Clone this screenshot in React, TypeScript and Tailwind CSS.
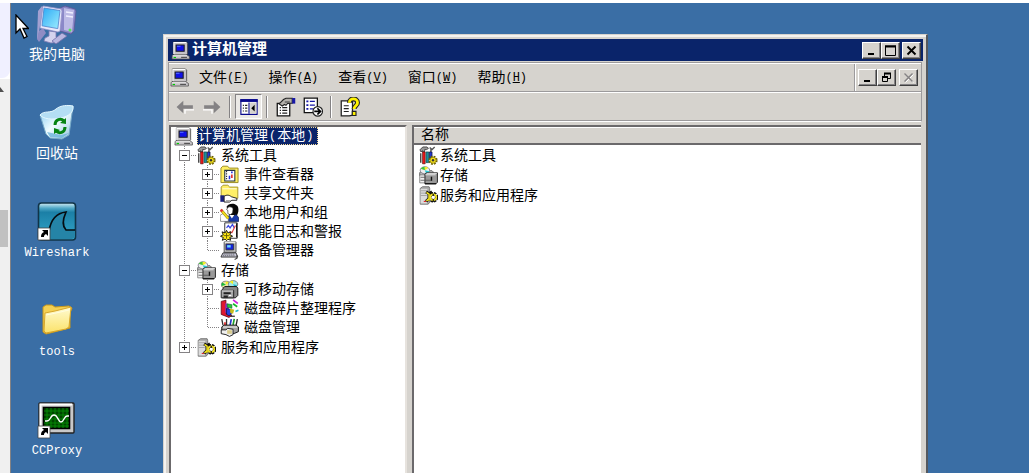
import type { ReactNode } from "react";

type IconProps = { className?: string };
type TreeItem = { label: string; icon: ReactNode; expandable?: boolean };

const cjk = "font-['Liberation_Mono','Noto_Sans_CJK_SC',monospace]";

function Svg({ children, size = 16, className = "size-[19px]" }: { children: ReactNode; size?: number; className?: string }) {
  return (
    <svg viewBox={`0 0 ${size} ${size}`} className={`${className} shrink-0`} aria-hidden="true">
      {children}
    </svg>
  );
}

/* ---- 16px icons ---- */

function ComputerIcon({ className }: IconProps) {
  return (
    <Svg className={className}>
      <path d="M2 .8h11l1 1v9l-1 1H2z" fill="#c6c3c6" stroke="#333" strokeWidth=".6" />
      <path d="M2.4 11V1.2H13" fill="none" stroke="#fff" strokeWidth=".9" />
      <path d="M4.3 3.3h6.8v5.4H4.3z" fill="#1010e8" stroke="#202020" strokeWidth=".9" />
      <path d="M5 4h3v1H5z" fill="#4b62ff" />
      <path d="M1 12h13l1.5 1v2.2H.8z" fill="#c6c3c6" stroke="#444" strokeWidth=".6" />
      <path d="M1.5 12.4h12" stroke="#fff" strokeWidth=".8" />
      <path d="M2.2 13.4h2v1h-2z" fill="#0c0" />
      <path d="M8.5 13.8h5" stroke="#555" />
    </Svg>
  );
}

function DeviceIcon() {
  return (
    <Svg>
      <path d="M3.5.8h10v8.7h-10z" fill="#bdbdbd" stroke="#555" strokeWidth=".8" />
      <path d="M4 1.2h9" stroke="#fff" strokeWidth=".7" />
      <path d="M5 2.5h6.5v5H5z" fill="#1424d8" stroke="#333" strokeWidth=".7" />
      <path d="M6 3.5h3v2H6z" fill="#6bd8ff" />
      <path d="M2.5 10h11l1.5 3.5H.8z" fill="#c8c8d8" stroke="#333" strokeWidth=".8" />
      <path d="M3 11h9M2.5 12.4h10" stroke="#555" strokeDasharray="1 .6" strokeWidth=".7" />
      <path d="M14.3 12v2.500l-2 1" fill="none" stroke="#444" />
    </Svg>
  );
}

function ToolsIcon() {
  return (
    <Svg>
      <path d="M.8 3.2 3.2.8h3.6L8 2 6.5 3H4.8v2H3V4L1.6 5z" fill="#999" stroke="#222" strokeWidth=".6" />
      <path d="M9 1.2 11 3l2.2-2.2M10 2v3" fill="none" stroke="#555" strokeWidth="1.1" />
      <path d="M3 5h2.200v10H3z" fill="#f01818" stroke="#400" strokeWidth=".5" />
      <path d="M6 5h2.200v9H6z" fill="#1590a0" stroke="#033" strokeWidth=".5" />
      <path d="M8.800 5h2.200v5H8.800z" fill="#2438d0" stroke="#002" strokeWidth=".5" />
      <path d="M1.500 6v8" stroke="#222" />
      <circle cx="11.800" cy="12" r="2.900" fill="none" stroke="#6b5f00" strokeWidth="2" strokeDasharray="1.400 .900" />
      <circle cx="11.800" cy="12" r="2.600" fill="#f2df1c" stroke="#8a7900" strokeWidth=".6" />
      <circle cx="11.800" cy="12" r="1" fill="#333" />
    </Svg>
  );
}

function EventIcon() {
  return (
    <Svg>
      <path d="M.8 14.8V2.600L2.400 1h4l1.500 1.600h7.300v12.200z" fill="#ffef62" stroke="#998a22" strokeWidth=".8" />
      <path d="M4 4.500h8.500v9H4z" fill="#fff" stroke="#234" strokeWidth=".9" />
      <path d="M5.500 5v8" stroke="#333" strokeDasharray="1 1" />
      <path d="M8 12V9M10 7V5.500" stroke="#2030e0" strokeWidth="1.300" />
      <path d="M10 8v3" stroke="#e02020" strokeWidth="1.300" />
    </Svg>
  );
}

function SharedIcon() {
  return (
    <Svg>
      <path d="M1 11V2.600L2.600 1h4l1.600 1.600H15V12H1z" fill="#ffef66" stroke="#a3932a" strokeWidth=".8" />
      <path d="M2 4h12" stroke="#fffbd0" />
      <path d="M.3 9.500h3.600v5.500H.3z" fill="#18207f" />
      <path d="M3.500 10.500c2-1.800 4.500-1.200 6 .2l4.700 1.400v1.600H10l-2 1.500H3.500z" fill="#fff" stroke="#222" strokeWidth=".8" />
      <path d="M5 14h4" stroke="#777" strokeWidth=".6" />
    </Svg>
  );
}

function UsersIcon() {
  return (
    <Svg>
      <path d="M5.500 3.200C7 .3 12-.3 14.500 2.400c1.600 2 1.200 6-.5 8.100H8z" fill="#080808" />
      <path d="M6.800 3.500c2-.7 3.700.1 4.200 1.400l-.4 3.600-2 1.400-2-1V6.200L5.500 5.500z" fill="#fff" stroke="#222" strokeWidth=".5" />
      <path d="m4 15.500 4-5.500 3 1.300 2.500-1.600 2.200 2.600v3.200z" fill="#1739a8" stroke="#071746" strokeWidth=".6" />
      <path d="m8 10 2 3 2-3z" fill="#fff" />
      <path d="m0 10.500 3-2 4 3v4H.500z" fill="#fff" stroke="#555" strokeWidth=".5" />
      <path d="m1 6 6 7" stroke="#9c8500" strokeWidth="2.400" />
      <path d="m1 6 6 7" stroke="#f4df20" strokeWidth="1.400" />
      <path d="m.6 5.500 1.400 1.600" stroke="#e23131" strokeWidth="2" />
    </Svg>
  );
}

function PerfIcon() {
  return (
    <Svg>
      <path d="M4 .7h10.500v13H4z" fill="#fff" stroke="#333" strokeWidth=".8" />
      <path d="m5.500 5 1.500-2L8.500 5l2-3 1.500 3" fill="none" stroke="#3a48e0" />
      <path d="m8 8 2 1 3-6" fill="none" stroke="#e04040" />
      <path d="M14 1v12" stroke="#111" />
      <path d="m5.500 7 1.200 2.200 2.600-.9-1 2.400 2.300 1.300-2.400 1 .8 2.400-2.300-.9-1.200 1.200-1.200-1.300-2.400 1 .9-2.400L.4 12l2.300-1.300-1-2.400 2.600.9z" fill="#ffea16" stroke="#111" strokeWidth=".8" />
      <path d="M5.500 9v5M3 11.500h5" stroke="#6b5f00" strokeWidth=".8" />
    </Svg>
  );
}

function StorageIcon() {
  return (
    <Svg>
      <path d="M.6 5.500 3 4h8l1 1v3H.6z" fill="#bcbcbc" stroke="#555" strokeWidth=".7" />
      <ellipse cx="5" cy="3.600" rx="4" ry="3" fill="#eee" stroke="#667" strokeWidth=".6" />
      <path d="M5 3.600 1.400 2.400A4 3 0 0 1 4.800.700z" fill="#40c438" />
      <path d="M5 3.600 4.800.700a4 3 0 0 1 3 1z" fill="#f6ee24" />
      <path d="M5 3.600 8.800 4.400a4 3 0 0 1-3 2z" fill="#23cbd5" />
      <path d="M.6 7.500h5v6.700h-5z" fill="#f0f0f0" stroke="#666" strokeWidth=".6" />
      <path d="m5 7 1.300-1.300h9.200v8L14.200 15H5z" fill="#999" stroke="#222" strokeWidth=".8" />
      <path d="M5.500 7.400h8.500M6.500 6.200h8.500" stroke="#e8e8e8" strokeWidth=".8" />
      <path d="M10.500 9v3.500" stroke="#111" strokeWidth="1.200" />
      <path d="M1.300 9.500h4M1.300 12h9" stroke="#555" strokeWidth=".7" />
      <path d="M5 14.900h9.500" stroke="#111" />
    </Svg>
  );
}

function RemovableIcon() {
  return (
    <Svg>
      <ellipse cx="5" cy="4" rx="3.800" ry="3" fill="#e9e7a0" stroke="#666" strokeWidth=".6" />
      <path d="M5 4 2 2.200A4 3 0 0 0 1.500 5z" fill="#18bb3d" />
      <path d="M5 4V1l2.500 1z" fill="#f4ef21" />
      <ellipse cx="11" cy="3.500" rx="4" ry="3" fill="#9de6e8" stroke="#666" strokeWidth=".6" />
      <path d="m11 3.500-3-2 3-1z" fill="#f4ef21" />
      <path d="m11 3.500 3.500 1-2 1.500z" fill="#19b5c4" />
      <path d="m3 6.500 1-1h10l1 1.500v6l-2 2H2V8z" fill="#888" stroke="#111" strokeWidth=".8" />
      <path d="M1 8.700h10.500V15H1z" fill="#a8a8a8" stroke="#222" strokeWidth=".8" />
      <path d="M1.500 9.100h9.500" stroke="#eee" strokeWidth=".7" />
      <path d="M3 10.300h6v1.600H3zM3 13h3.600v2H3z" fill="#222" />
      <path d="M7.500 13h2" stroke="#fff" />
    </Svg>
  );
}

function DefragIcon() {
  return (
    <Svg>
      <path d="m1 2 4-1v11l5 2-2.500 1.500L1 13z" fill="#e01730" stroke="#520010" strokeWidth=".6" />
      <path d="m4.500 3.500 3 1v8l-3-1z" fill="#9c35ce" />
      <path d="m6 4 4 .8v3l-4-.8z" fill="#29c733" stroke="#063" strokeWidth=".5" />
      <path d="m5.500 8 4 1v4l-2 1-2-1z" fill="#2442e0" stroke="#002" strokeWidth=".5" />
      <path d="m8.500 8 3.500 1-1 3.500-2.500-1z" fill="#c8bd1a" />
      <path d="m11 .8 4 3" stroke="#cf20dc" strokeWidth="1.400" />
      <path d="m11 4 3.500 2.500" stroke="#16ba28" strokeWidth="1.400" />
      <path d="m13 10.500 2.500-1" stroke="#19b5c4" strokeWidth="1.400" />
      <path d="M9 14.500h3.500" stroke="#222" />
    </Svg>
  );
}

function DiskIcon() {
  return (
    <Svg>
      <path d="m1.500 1 1 5M5.500.8v5" stroke="#333" strokeWidth="1.100" />
      <path d="m9.500 1-1 5" stroke="#1f35d0" strokeWidth="1.400" />
      <path d="m12 .8-1 5" stroke="#1c9c2a" strokeWidth="1.400" />
      <path d="m14.600 1-1 5" stroke="#222" strokeWidth="1.100" />
      <path d="M3.500 3.500h1.400v3H3.500z" fill="#df2222" />
      <path d="m1.500 7.500 2-1.500h10l2 1.500v4L12 13H1.500z" fill="#a3a3a3" stroke="#111" strokeWidth=".8" />
      <path d="M2.500 7.600h12" stroke="#e5e5e5" />
      <path d="M1 10h4l1.500-1.300 4.500.8V14l-3 1.500L5 14l-4-.8z" fill="#efefef" stroke="#222" strokeWidth=".8" />
      <path d="M6 11h4M6 12.600h4" stroke="#c0a519" strokeWidth=".7" />
    </Svg>
  );
}

function ServicesIcon() {
  return (
    <Svg>
      <path d="m1 2 2-1.400h5.500L9 2v12l-1.400 1.300H1z" fill="#aaa" stroke="#666" strokeWidth=".7" />
      <path d="M1.300 2.400H7v12.300H1.300z" fill="#dcdcdc" />
      <path d="M1.500 4h5M1.500 6h5M1.500 8h5" stroke="#999" strokeWidth=".7" />
      <path d="M4 13h2" stroke="#e02b2b" />
      <path d="m6 5 2.500 1.500L11 5M6 13l2.500-2.500M8.500 6.500v6" fill="none" stroke="#111" strokeWidth="2.600" />
      <circle cx="12" cy="9.500" r="2.900" fill="none" stroke="#111" strokeWidth="3" strokeDasharray="1.700 .600" />
      <path d="m6.300 5.500 2.200 1.300M6.300 12.500l2.200-1.800M8.500 6.500v6" fill="none" stroke="#f3e31e" strokeWidth="1.300" />
      <circle cx="12" cy="9.500" r="2.500" fill="none" stroke="#f3e31e" strokeWidth="1.400" />
      <path d="M12 6.500v2M12 11v2.500" stroke="#111" />
    </Svg>
  );
}

/* ---- toolbar icons ---- */

function ArrowIcon({ className = "size-[18px]" }: IconProps) {
  return (
    <Svg className={className}>
      <path d="M16 10.500H8v3.500" fill="none" stroke="#fff" strokeWidth="1.200" />
      <path d="m.5 8 6-5.500v4H15v3H6.500v4z" fill="#848284" />
    </Svg>
  );
}

function ConsoleTreeIcon() {
  return (
    <Svg className="size-[18px]">
      <path d="M.8 1.500h14.400v13H.8z" fill="#fff" stroke="#08088c" />
      <path d="M.3 1h15.400v2.500H.3z" fill="#08088c" />
      <path d="M8 4v10" stroke="#08088c" />
      <path d="M9 4h5.500v9.800H9z" fill="#d6d3ce" />
      <path d="M2.500 6.500h1M2.500 9h1M2.500 11.500h1M4.500 6.500h2M4.500 9h2M4.500 11.500h2" stroke="#222" />
      <path d="M13 6v6L10 9z" fill="#000" />
    </Svg>
  );
}

function PropertiesIcon() {
  return (
    <Svg className="size-5">
      <path d="M1 5h10v10H1z" fill="#fff" stroke="#111" />
      <path d="M3 8.500h1M5 8.500h4M3 10.700h1M5 10.700h4M3 12.900h1M5 12.900h4" stroke="#222" strokeWidth=".9" />
      <path d="M2.500 5.500 6 2l2-1h5v4H9.500L8 6.700 6.800 6 5 7.200z" fill="#b4b1ac" stroke="#222" strokeWidth=".9" />
      <path d="M13 .8h2.400v4.500H13z" fill="#1717a8" />
      <path d="M7 4h4" stroke="#555" />
    </Svg>
  );
}

function ExportIcon() {
  return (
    <Svg className="size-5">
      <path d="M1 .8h10.500v11.700H1z" fill="#fff" stroke="#111" />
      <path d="M2.700 3.500h1.600M2.700 6.500h1.600M2.700 9.500h1.600" stroke="#1717a8" strokeWidth="1.500" />
      <path d="M5.500 3.500h4M5.500 6.500h4M5.500 9.500h3" stroke="#1717a8" />
      <circle cx="11.800" cy="11.500" r="3.800" fill="#fff" stroke="#222" strokeWidth=".9" />
      <path d="M9 11.500h4.500M11.500 9l2.500 2.500-2.500 2.500" fill="none" stroke="#000" strokeWidth="1.400" />
    </Svg>
  );
}

function HelpIcon() {
  return (
    <Svg className="size-5">
      <path d="M1 3h9v11.500L7.500 15H1z" fill="#fff" stroke="#222" />
      <path d="M3 7h4M3 9.300h4M3 11.600h4" stroke="#222" strokeWidth=".9" />
      <path d="M7.500 4.500c0-4 6.500-4 6.500 0 0 2.500-2.700 2.500-2.700 5" fill="none" stroke="#222" strokeWidth="4" />
      <path d="M7.500 4.500c0-4 6.500-4 6.500 0 0 2.500-2.700 2.500-2.700 5" fill="none" stroke="#fff200" strokeWidth="2.300" />
      <path d="M9.800 11.500h3v3.300h-3z" fill="#fff200" stroke="#222" strokeWidth=".9" />
    </Svg>
  );
}

/* ---- desktop icons ---- */

function MyComputerIcon() {
  return (
    <Svg size={40} className="size-10">
      <defs>
        <linearGradient id="screen" x1="0" y1="0" x2="1" y2="1">
          <stop stopColor="#2ba9f5" />
          <stop offset="1" stopColor="#9deeff" />
        </linearGradient>
      </defs>
      <path d="m23 4 5-2 10 3 1 2-2 20-3 3-11-3z" fill="#8b88c8" stroke="#5b5796" strokeWidth=".8" />
      <path d="m27 4 10 2-2 22-8-2z" fill="#bdbbe6" />
      <path d="m29 8 7 1M29 12l7 1" stroke="#efeeff" strokeWidth="1.600" />
      <circle cx="33" cy="26" r="1.500" fill="#54e35c" />
      <path d="m1 7 4-5 1 2-4 24-1 8-1-2z" fill="#a3a0d1" />
      <path d="m2 27 4-3 3 5-7 9-2-3z" fill="#8f8cc4" />
      <path d="M6 2 24 5l1 2-2 20-2 1L3 24z" fill="#e8e8fb" stroke="#9896cc" strokeWidth=".8" />
      <path d="m7 4 16 2.600-2.200 18L5 21.800z" fill="url(#screen)" stroke="#4c82cc" strokeWidth=".8" />
      <path d="m12 27 7 1v5l4 2-1 3-8 1-7-2 1-3 4-2z" fill="#d5d3ee" stroke="#807cb4" strokeWidth=".8" />
      <path d="m15 37 10-8 5 3-11 8z" fill="#b9b6e0" stroke="#716da8" strokeWidth=".8" />
    </Svg>
  );
}

function RecycleIcon() {
  return (
    <Svg size={40} className="size-10">
      <defs>
        <linearGradient id="bin" x1="0" y1="0" x2="1" y2="1">
          <stop stopColor="#7cc6f0" />
          <stop offset=".5" stopColor="#effcff" />
          <stop offset="1" stopColor="#91c3df" />
        </linearGradient>
      </defs>
      <path d="m3 12 33-9-4 29-7 4-12-1-4-4z" fill="url(#bin)" stroke="#77aac8" />
      <path d="M3 12c4-5 11-1 16-6 5-4 12-4 17-3 1 6-4 10-12 12C15 17 6 16 3 12z" fill="#b4def4" stroke="#e4f8ff" />
      <path d="m10 29 14 3 8-2-7 5-12-1z" fill="#60add9" opacity=".7" />
      <g fill="none" stroke="#078414" strokeWidth="3">
        <path d="M18 22c0-6 6-7 9-4" />
        <path d="M28 24c0 6-6 7-9 4" />
      </g>
      <path d="m23 20 6-5v6zM17 31v-6l6 2z" fill="#078414" />
    </Svg>
  );
}

function Shortcut() {
  return (
    <g>
      <path d="M1 26h12v12H1z" fill="#fff" stroke="#444" strokeWidth=".8" />
      <path d="M4 35c0-3 1-4 3-5l-2-2h6v6l-2-2c-2 1-2 2-2 3z" fill="#000" />
    </g>
  );
}

function WiresharkIcon() {
  return (
    <Svg size={40} className="size-10">
      <defs>
        <linearGradient id="shark" x1="0" y1="0" x2="0" y2="1">
          <stop stopColor="#d2ecf4" />
          <stop offset=".14" stopColor="#50a9c7" />
          <stop offset=".25" stopColor="#1b7fa6" />
          <stop offset="1" stopColor="#35a8cb" />
        </linearGradient>
      </defs>
      <rect x="1.500" y="1" width="37" height="37" rx="3" fill="url(#shark)" stroke="#103448" strokeWidth="1.600" />
      <path d="M12 29C14 17 19 11 29 10c-4 9-3 15 0 18h9v7l-3 2H13z" fill="#2584a7" />
      <path d="M12 29C14 17 19 11 29 10c-4 9-3 15 0 18h9" fill="none" stroke="#050c10" strokeWidth="1.700" />
      <Shortcut />
    </Svg>
  );
}

function FolderIcon() {
  return (
    <Svg size={40} className="size-10">
      <defs>
        <linearGradient id="folder" x1="0" y1="0" x2="0" y2="1">
          <stop stopColor="#fffbd0" />
          <stop offset="1" stopColor="#fbe26a" />
        </linearGradient>
      </defs>
      <path d="M6 31V6l3-2h6l3 2 14-1 3 2-2 5v15L9 33z" fill="#f4d052" stroke="#c8971b" />
      <path d="m8 12 10-2 16-4-2 20-3 2-20 4-2-2z" fill="url(#folder)" stroke="#d8a72b" />
      <path d="m9 14 10-2 13-3" fill="none" stroke="#fffde0" />
    </Svg>
  );
}

function ProxyIcon() {
  return (
    <Svg size={40} className="size-10">
      <rect x="2" y="3" width="35" height="30" rx="1" fill="#c8c8c8" stroke="#222" strokeWidth="1.400" />
      <path d="M3.500 31V4.500H35" fill="none" stroke="#fff" strokeWidth="2" />
      <path d="M6.500 7.500h26v21h-26z" fill="#004600" stroke="#000" strokeWidth="1.600" />
      <path d="M10 8v20M14 8v20M18 8v20M22 8v20M26 8v20M30 8v20M7 11h25M7 15h25M7 19h25M7 23h25M7 26h25" stroke="#069406" strokeWidth=".8" />
      <path d="M8 21h2c4 0 3-6 7-6s4 7 7 7 3-6 6-6h2" fill="none" stroke="#fff" strokeWidth="1.400" />
      <Shortcut />
    </Svg>
  );
}

/* ---- data ---- */

const desktopItems = [
  { label: "我的电脑", icon: <MyComputerIcon /> },
  { label: "回收站", icon: <RecycleIcon /> },
  { label: "Wireshark", icon: <WiresharkIcon /> },
  { label: "tools", icon: <FolderIcon /> },
  { label: "CCProxy", icon: <ProxyIcon /> },
];

const menus = [
  ["文件", "F"],
  ["操作", "A"],
  ["查看", "V"],
  ["窗口", "W"],
  ["帮助", "H"],
];

const groups: (TreeItem & { children: TreeItem[] })[] = [
  {
    label: "系统工具",
    icon: <ToolsIcon />,
    children: [
      { label: "事件查看器", icon: <EventIcon />, expandable: true },
      { label: "共享文件夹", icon: <SharedIcon />, expandable: true },
      { label: "本地用户和组", icon: <UsersIcon />, expandable: true },
      { label: "性能日志和警报", icon: <PerfIcon />, expandable: true },
      { label: "设备管理器", icon: <DeviceIcon /> },
    ],
  },
  {
    label: "存储",
    icon: <StorageIcon />,
    children: [
      { label: "可移动存储", icon: <RemovableIcon />, expandable: true },
      { label: "磁盘碎片整理程序", icon: <DefragIcon /> },
      { label: "磁盘管理", icon: <DiskIcon /> },
    ],
  },
  { label: "服务和应用程序", icon: <ServicesIcon />, children: [] },
];

/* ---- window parts ---- */

function CaptionButton({ label, disabled, children }: { label: string; disabled?: boolean; children: ReactNode }) {
  return (
    <button
      aria-label={label}
      disabled={disabled}
      className="flex h-[17px] w-[19px] items-center justify-center border border-t-white border-l-white border-r-[#404040] border-b-[#404040] bg-[#d6d3ce] shadow-[inset_-1px_-1px_0_#848284]"
    >
      <svg viewBox="0 0 13 11" className="h-[11px] w-[13px]" fill="none" stroke="#000" aria-hidden="true">
        {children}
      </svg>
    </button>
  );
}

function Separator() {
  return <div className="mx-1 h-[22px] w-[2px] border-l border-l-[#848284] bg-white" />;
}

function ToolButton({ label, children, pressed }: { label: string; children: ReactNode; pressed?: boolean }) {
  return (
    <button
      aria-label={label}
      className={
        pressed
          ? "flex h-[25px] w-[27px] items-center justify-center border border-t-[#848284] border-l-[#848284] border-r-white border-b-white bg-[#ebe9e6]"
          : "flex h-[25px] w-[27px] items-center justify-center"
      }
    >
      {children}
    </button>
  );
}

// dotted connector lines for one 23px tree column
function Guide({ line, children }: { line: "through" | "branch" | "end"; children?: ReactNode }) {
  return (
    <span className="relative h-[19px] w-[23px] shrink-0">
      <svg viewBox="0 0 23 19" className="h-[19px] w-[23px]" stroke="#848284" strokeDasharray="1 1" aria-hidden="true">
        <path d={line === "end" ? "M11.5 0v10" : "M11.5 0v19"} />
        {line !== "through" && <path d="M12 9.5h11" />}
      </svg>
      {children}
    </span>
  );
}

function Toggle({ label, open }: { label: string; open?: boolean }) {
  return (
    <button aria-label={label} aria-expanded={!!open} className="absolute top-1 left-[6px] size-[11px] border border-[#848284] bg-white">
      <svg viewBox="0 0 9 9" className="size-[9px]" stroke="#000" aria-hidden="true">
        <path d={open ? "M2 4.5h5" : "M2 4.5h5M4.5 2v5"} />
      </svg>
    </button>
  );
}

function Tree() {
  return (
    <div className="w-[238px] shrink-0 border-2 border-b-0 border-t-[#6b696b] border-l-[#6b696b] border-r-[#e7e3de] bg-white">
      <ul className="flex flex-col gap-px pl-[2px] text-[14px] leading-[19px] whitespace-nowrap text-black">
        <li className="flex h-[18px] items-center gap-1 pl-px">
          <ComputerIcon />
          <span className="flex h-[18px] items-center border border-dotted border-[#f5db95] bg-[#0a246a] pt-px pr-1 text-white">
            计算机管理<span className="px-px text-[12px]">(</span>本地<span className="pl-px text-[12px]">)</span>
          </span>
        </li>
        {groups.map((group, i) => {
          const last = i === groups.length - 1;
          return (
            <li key={group.label}>
              <div className="flex h-[19px] items-center">
                <Guide line={last ? "end" : "branch"}>
                  <Toggle label={group.label} open={group.children.length > 0} />
                </Guide>
                <span className="ml-px">{group.icon}</span>
                <span className="pt-[2px] pl-[5px]">{group.label}</span>
              </div>
              <ul>
                {group.children.map((item, j) => (
                  <li key={item.label} className="flex h-[19px] items-center">
                    <Guide line="through" />
                    <Guide line={j === group.children.length - 1 ? "end" : "branch"}>
                      {item.expandable && <Toggle label={item.label} />}
                    </Guide>
                    <span className="ml-px">{item.icon}</span>
                    <span className="pt-[2px] pl-[5px]">{item.label}</span>
                  </li>
                ))}
              </ul>
            </li>
          );
        })}
      </ul>
    </div>
  );
}

function DetailList() {
  return (
    <div className="min-w-0 flex-1 border-t-2 border-l-2 border-[#6b696b] bg-white">
      <table className="w-full border-separate border-spacing-0 text-[14px] text-black">
        <thead>
          <tr>
            <th className="h-[18px] border-t border-b-2 border-t-white border-b-[#6b696b] bg-[#d6d3ce] p-0 pl-[7px] text-left leading-[15px] font-normal">
              名称
            </th>
          </tr>
        </thead>
        <tbody>
          {groups.map((group) => (
            <tr key={group.label}>
              <td className="h-5 p-0 pl-[5px]">
                <span className="flex h-5 items-center gap-[2px]">
                  {group.icon}
                  <span className="pt-[2px] leading-5">{group.label}</span>
                </span>
              </td>
            </tr>
          ))}
        </tbody>
      </table>
    </div>
  );
}

function ManagementWindow() {
  return (
    <section className="mt-[31px] mr-[101px] ml-[60px] flex min-w-0 flex-1 flex-col border-t border-r-2 border-l border-t-[#d6d3ce] border-r-[#55595f] border-l-[#d6d3ce] bg-[#d6d3ce] pt-1 pr-[3px] pl-1 shadow-[inset_2px_2px_0_#f4f2ef]">
      <header className="flex h-[22px] items-center bg-[#0a246a] pr-[2px] pl-[3px]">
        <ComputerIcon />
        <h1 className="ml-[2px] flex-1 pt-[2px] text-[15px] leading-5 font-bold text-white">计算机管理</h1>
        <CaptionButton label="最小化"><path d="M3 9h6" strokeWidth="2" /></CaptionButton>
        <CaptionButton label="最大化"><path d="M1.5 1v9.5h10V1M1 1h11" /><path d="M1 1.5h11" strokeWidth="2" /></CaptionButton>
        <span className="w-[2px]" />
        <CaptionButton label="关闭"><path d="m2.5 1.5 8 8M10.5 1.5l-8 8" strokeWidth="1.9" /></CaptionButton>
      </header>

      <div className="mt-px mr-px border border-[#9c9a9c] border-b-white">
        <div className="flex h-[29px] border-t border-b border-t-white border-b-[#9c9a9c]">
          <div className="flex flex-1 items-center pl-px">
            <ComputerIcon />
            <nav className="flex">
              {menus.map(([name, key]) => (
                <button key={key} className="flex items-center px-[10px] text-[14px] leading-5 whitespace-nowrap text-black">
                  {name}
                  <span className="text-[12px]">(<u>{key}</u>)</span>
                </button>
              ))}
            </nav>
          </div>
          <div className="flex items-center border-l border-l-[#9c9a9c] pr-[3px] pl-[3px] shadow-[inset_1px_0_0_#fff]">
            <CaptionButton label="最小化子窗口"><path d="M3 9h6" strokeWidth="2" /></CaptionButton>
            <CaptionButton label="还原子窗口">
              <path d="M4.500 4V1.500h6v5H8" /><path d="M4 1.500h7" strokeWidth="2" />
              <path d="M2.500 5.500h5v4h-5z" /><path d="M2 5h6" strokeWidth="2" />
            </CaptionButton>
            <span className="w-[3px]" />
            <CaptionButton label="关闭子窗口" disabled>
              <path d="m3.500 2.500 8 8M11.500 2.500l-8 8" stroke="#fff" />
              <path d="m2.500 1.500 8 8M10.500 1.500l-8 8" stroke="#848284" strokeWidth="1.300" />
            </CaptionButton>
          </div>
        </div>
        <div className="flex h-[29px] items-center border-t border-b border-t-white border-b-[#9c9a9c] pl-[2px]">
          <ToolButton label="后退"><ArrowIcon /></ToolButton>
          <ToolButton label="前进"><ArrowIcon className="size-[18px] -scale-x-100" /></ToolButton>
          <Separator />
          <ToolButton label="显示/隐藏控制台树" pressed><ConsoleTreeIcon /></ToolButton>
          <Separator />
          <ToolButton label="属性"><PropertiesIcon /></ToolButton>
          <ToolButton label="导出列表"><ExportIcon /></ToolButton>
          <Separator />
          <ToolButton label="帮助"><HelpIcon /></ToolButton>
        </div>
      </div>

      <div className="mt-[3px] mr-[2px] ml-px flex flex-1 gap-[5px]">
        <Tree />
        <DetailList />
      </div>
    </section>
  );
}

function HostScrollStrip() {
  return (
    <aside className="flex w-[10px] shrink-0 flex-col bg-[#f0f0f0]">
      <div className="h-[79px] bg-white pt-[3px]">
        <div className="h-[75px] rounded-br-lg bg-[#f0f0ff]" />
      </div>
      <svg viewBox="0 0 4 5" className="mt-2 h-[5px] w-1 fill-[#505050]" aria-hidden="true">
        <path d="M0 0 4 5H0z" />
      </svg>
      <div className="mt-[118px] h-[37px] w-2 bg-[#c1c1c1]" />
    </aside>
  );
}

export default function App() {
  return (
    <div className={`flex min-h-screen bg-white ${cjk}`}>
      <HostScrollStrip />
      <main className="relative mt-[3px] flex min-w-0 flex-1 border-l border-l-[#848284] bg-[#3a6ea5]">
        <ul className="flex w-[92px] shrink-0 flex-col gap-[38px] pt-px">
          {desktopItems.map((item) => (
            <li key={item.label}>
              <button className="flex w-full flex-col items-center gap-px text-white">
                {item.icon}
                <span className={/^[A-Za-z]/.test(item.label) ? "text-[12px] leading-5" : "text-[14px] leading-5"}>{item.label}</span>
              </button>
            </li>
          ))}
        </ul>
        <ManagementWindow />
        <svg viewBox="0 0 14 25" className="absolute top-[11px] left-1 h-[25px] w-[14px]" aria-hidden="true">
          <path d="M1 1v18l4-4 4 9 3-1.500-4-8h5.500z" fill="#fff" stroke="#000" strokeWidth="1.300" />
        </svg>
      </main>
    </div>
  );
}
